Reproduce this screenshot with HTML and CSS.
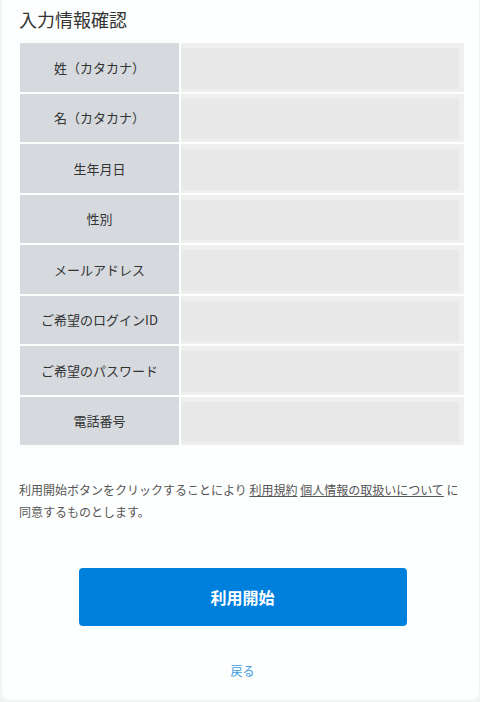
FILE: index.html
```html
<!DOCTYPE html>
<html lang="ja">
<head>
<meta charset="utf-8">
<link rel="stylesheet" href="styles.css">
</head>
<body>
<div class="card">
  <h2 class="title">入力情報確認</h2>
  <table class="info">
    <colgroup><col class="c-label"><col class="c-value"></colgroup>
    <tbody>
      <tr><th>姓（カタカナ）</th><td><div class="field"></div></td></tr>
      <tr><th>名（カタカナ）</th><td><div class="field"></div></td></tr>
      <tr><th>生年月日</th><td><div class="field"></div></td></tr>
      <tr><th>性別</th><td><div class="field"></div></td></tr>
      <tr><th>メールアドレス</th><td><div class="field"></div></td></tr>
      <tr><th>ご希望のログインID</th><td><div class="field"></div></td></tr>
      <tr><th>ご希望のパスワード</th><td><div class="field"></div></td></tr>
      <tr><th>電話番号</th><td><div class="field"></div></td></tr>
    </tbody>
  </table>
  <p class="terms">利用開始ボタンをクリックすることにより <a href="#">利用規約</a> <a href="#">個人情報の取扱いについて</a> に同意するものとします。</p>
  <div class="actions">
    <button class="primary" type="button">利用開始</button>
  </div>
  <div class="back"><a href="#">戻る</a></div>
</div>
</body>
</html>
```

FILE: styles.css
```css
html, body {
  margin: 0;
  padding: 0;
}
body {
  background: #f3f4f5;
  font-family: "Noto Sans CJK JP", "Noto Sans", sans-serif;
  color: #333;
}
.card {
  margin: 0 1px 0 2px;
  height: 700px;
  box-sizing: border-box;
  background: #fdfefe;
  border-radius: 0 0 8px 8px;
  padding: 6px 14px 0 16px;
}
.title {
  margin: 0;
  font-size: 18px;
  line-height: 26px;
  font-weight: normal;
  color: #333;
  padding-left: 1px;
}
.info {
  margin-top: 9px;
  border-collapse: separate;
  border-spacing: 2px;
  table-layout: fixed;
  width: 448px;
}
.c-label { width: 159px; }
.c-value { width: 283px; }
.info th {
  background: #d6dade;
  font-weight: normal;
  font-size: 13px;
  color: #333;
  height: 48.5px;
  padding: 0;
  text-align: center;
  vertical-align: middle;
}
.info td {
  background: #efefef;
  padding: 5px 5px 3px 1px;
  height: 48.5px;
  box-sizing: border-box;
}
.field {
  background: #e8e8e8;
  height: 40.5px;
}
.terms {
  margin: 32px 0 0 1px;
  font-size: 12px;
  line-height: 22px;
  color: #555;
}
.terms a {
  color: #555;
  text-decoration: underline;
}
.actions {
  display: flex;
  justify-content: center;
  margin-top: 45px;
  padding-left: 2px;
}
.primary {
  width: 328px;
  height: 58px;
  border: none;
  border-radius: 4px;
  background: #0080dd;
  color: #fff;
  font-family: "Noto Sans CJK JP", "Noto Sans", sans-serif;
  font-size: 16px;
  font-weight: bold;
}
.back {
  margin-top: 35px;
  text-align: center;
  font-size: 12px;
  line-height: 20px;
  padding-left: 2px;
}
.back a {
  color: #3a9ae0;
  text-decoration: none;
}
```
